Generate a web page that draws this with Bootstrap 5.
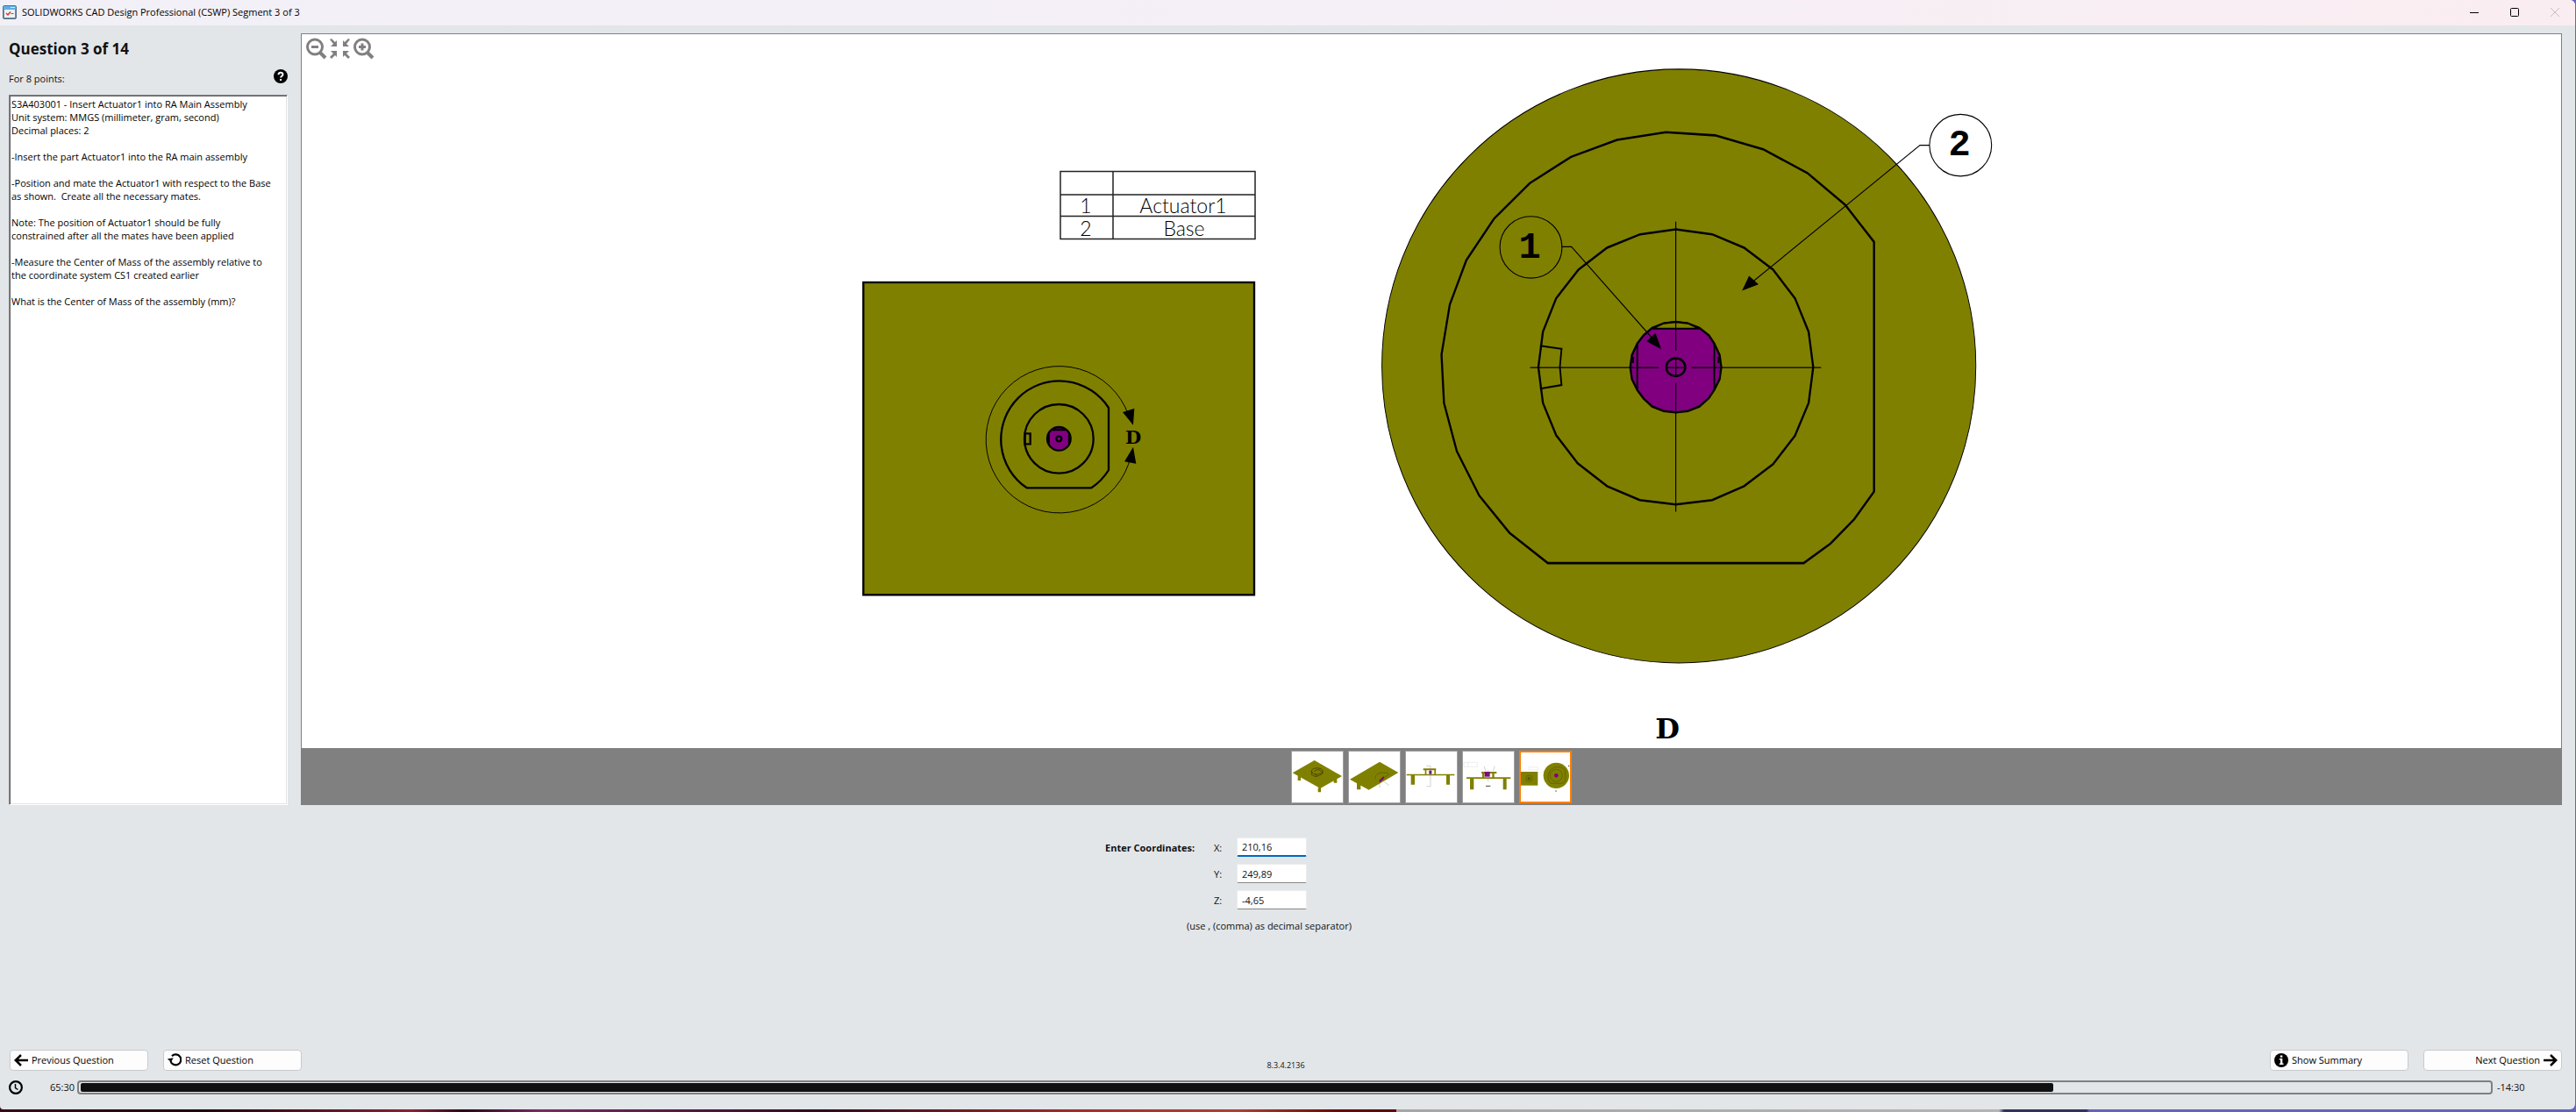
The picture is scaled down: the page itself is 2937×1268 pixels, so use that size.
<!DOCTYPE html>
<html lang="en">
<head>
<meta charset="utf-8">
<meta name="viewport" content="width=device-width, initial-scale=1">
<title>SOLIDWORKS CAD Design Professional (CSWP) Segment 3 of 3</title>
<link href="https://cdn.jsdelivr.net/npm/bootstrap@5.3.0/dist/css/bootstrap.min.css" rel="stylesheet">
<style>
  body { font-family: "Open Sans", "Noto Sans", sans-serif; font-size: 11px; line-height: 15px; color: #111;
    background: linear-gradient(90deg, #3a0a14 0, #20040c 8%, #8a2030 16%, #2a0618 18%, #7a2a60 21%, #30081c 32%, #a82c28 42%, #b04030 48%, #6a0800 52%, #5a0c00 54.2%, #a6a6a6 54.2%, #b4b4b4 77.6%, #33305e 77.8%, #33305e 81%, #6562bd 81.1%); }
  .app-window { background: #e2e6e9; border-radius: 0 6px 6px 4px; margin: 0 1px 3px 0; overflow: hidden; flex: 1 0 auto; }
  .title-strip { height: 29px; background: linear-gradient(90deg, #f2f0f7 0, #f5eff6 60%, #faedf1 100%); color: #000; padding: 0 0 2px 3px; gap: 6px; }
  .title-strip svg { display: block; }
  .app-title { font-size: 11px; }
  .caption-btn { width: 46px; height: 27px; padding: 0; border: 0; background: none; color: #000; margin-left: -6px; }
  .caption-btn:disabled { color: #c4bcc2; }
  .work-area { padding: 9px 15px 0 10px; gap: 15px; }
  .side-pane { width: 318px; flex: none; }
  .side-pane h1 { font-size: 17px; line-height: 24px; font-weight: 700; margin: 6px 0 10px; }
  .points-row { height: 22px; margin-bottom: 8px; }
  .help-btn { padding: 0; border: 0; background: none; margin-bottom: 4px; }
  .help-btn svg { display: block; }
  .question-box { background: #fff; color: #000; border: 1px solid; border-color: #858585 #fff #fff #858585; box-shadow: inset 1px 1px #5e5e5e, inset -1px -1px #e3e3e3; padding: 2px 12px 2px 2px; }
  .question-box p { margin: 0 0 15px; }
  .viewer { border: 1px solid #808080; border-bottom: 0; background: #fff; position: relative; min-width: 0; }
  .viewer-tools { position: absolute; left: 4px; top: 4px; gap: 2px; }
  .viewer-tools button { padding: 0; border: 0; background: none; width: 25px; height: 25px; }
  .viewer-tools svg { display: block; }
  .drawing { display: block; width: 100%; height: auto; }
  .thumb-strip { background: #808080; padding: 3px 0 2px; gap: 5px; }
  .thumb { width: 60px; height: 60px; padding: 0; background: #fff; border: 1px solid #a0a0a0; overflow: hidden; }
  .thumb.chosen { border: 2px solid #ff8000; }
  .thumb svg { display: block; width: 100%; height: 100%; }
  .answer-form { width: 416px; margin: 36px auto 0; }
  .answer-row { height: 24px; margin-bottom: 6px; }
  .answer-lead { width: 124px; font-weight: 700; white-space: nowrap; }
  .axis-label { width: 26px; }
  .answer-row input { width: 80px; height: 22px; border: 1px solid #ececec; border-bottom-color: #868686; border-radius: 2px; padding: 0 5px; background: #fff; color: #111; font-size: 11px; outline: 0; box-shadow: none; }
  .answer-row input.active-field { border-bottom: 2px solid #0067c0; }
  .answer-hint { margin: 10px 0 0 93px; }
  .foot-bar { padding: 0 15px 0 11px; }
  .btn-pair { gap: 17px; }
  .nav-btn { width: 158px; height: 24px; padding: 0 4px; gap: 4px; background: #fdfdfd; border: 1px solid #c8cbce; border-radius: 4px; color: #000; font-size: 11px; line-height: 22px; }
  .nav-btn svg { flex: none; }
  .build-no { font-size: 9px; line-height: 12px; margin-top: 12px; }
  .timer-row { padding: 10px 58px 17px 10px; height: 44px; }
  .time-left { width: 62px; padding-right: 3px; }
  .timer-track { height: 16px; border: 2px solid #808080; border-radius: 4px; padding: 1px 2px; background: transparent; font-size: 11px; }
  .timer-track .progress-bar { background: #101010; border-radius: 2px; }
  .time-over { width: 36px; padding-left: 5px; }
</style>
</head>
<body class="d-flex flex-column min-vh-100">
<div class="app-window d-flex flex-column">
  <header class="title-strip d-flex align-items-center">
    <svg width="16" height="16" viewBox="0 0 16 16" aria-hidden="true"><rect x=".5" y=".5" width="15" height="15" rx="1.5" fill="#6f8ea6" stroke="#527087"/><rect x="1" y="1" width="14" height="4" fill="#5cb0e6"/><path d="M9 2.500h5" stroke="#cfeaff"/><rect x="2" y="5" width="12" height="9" fill="#eef1f3"/><path d="M4 9l2 2 3-3.500" fill="none" stroke="#d23434" stroke-width="1.500"/><path d="M9.500 9.500h3" stroke="#666"/></svg>
    <span class="flex-grow-1 app-title">SOLIDWORKS CAD Design Professional (CSWP) Segment 3 of 3</span>
    <button class="caption-btn" aria-label="Minimize"><svg width="10" height="10" class="mx-auto"><path d="M0 5.500h10" stroke="currentColor"/></svg></button>
    <button class="caption-btn" aria-label="Maximize"><svg width="10" height="10" class="mx-auto"><rect x=".5" y=".5" width="9" height="9" rx="1" fill="none" stroke="currentColor"/></svg></button>
    <button class="caption-btn" aria-label="Close" disabled><svg width="10" height="10" class="mx-auto"><path d="M0 0l10 10M10 0L0 10" stroke="currentColor"/></svg></button>
  </header>

  <main class="work-area d-flex">
    <aside class="side-pane d-flex flex-column">
      <h1>Question 3 of 14</h1>
      <div class="points-row d-flex justify-content-between align-items-center">
        <span>For 8 points:</span>
        <button class="help-btn" aria-label="Help"><svg width="16" height="16" viewBox="0 0 16 16"><circle cx="8" cy="8" r="8"/><path d="M5.500 6.200C5.500 3 10.700 3 10.500 6c0 1.700-2.400 1.700-2.400 3.600M8.100 11v2" fill="none" stroke="#fff" stroke-width="2"/></svg></button>
      </div>
      <div class="question-box flex-grow-1">
        <p>S3A403001 - Insert Actuator1 into RA Main Assembly<br>Unit system: MMGS (millimeter, gram, second)<br>Decimal places: 2</p>
        <p>-Insert the part Actuator1 into the RA main assembly</p>
        <p>-Position and mate the Actuator1 with respect to the Base as shown.&nbsp; Create all the necessary mates.</p>
        <p>Note: The position of Actuator1 should be fully<br>constrained after all the mates have been applied</p>
        <p>-Measure the Center of Mass of the assembly relative to<br>the coordinate system CS1 created earlier</p>
        <p>What is the Center of Mass of the assembly (mm)?</p>
      </div>
    </aside>

    <section class="viewer flex-grow-1">
      <div class="viewer-tools d-flex">
        <button aria-label="Zoom out"><svg width="25" height="25" viewBox="0 0 25 25" fill="none" stroke="#808080"><circle cx="11" cy="10.500" r="8.500" stroke-width="3"/><path d="M17 17l6 6" stroke-width="4"/><path d="M7 10.500h8" stroke-width="3"/></svg></button>
        <button aria-label="Fit to window"><svg width="25" height="25" viewBox="0 0 25 25" fill="#808080"><path d="M1 2l2-1 4 4 2-2v7H2l3-3zM24 2l-2-1-4 4-2-2v7h7l-3-3zM1 22l2 2 4-4 2 2v-7H2l3 3zM24 22l-2 2-4-4-2 2v-7h7l-3 3z"/></svg></button>
        <button aria-label="Zoom in"><svg width="25" height="25" viewBox="0 0 25 25" fill="none" stroke="#808080"><circle cx="11" cy="10.500" r="8.500" stroke-width="3"/><path d="M17 17l6 6" stroke-width="4"/><path d="M7 10.500h8M11 6.500v8" stroke-width="3"/></svg></button>
      </div>

      <svg class="drawing" viewBox="344 39 2576 814" role="img" aria-label="Assembly drawing with detail D">
        <!-- bill of materials -->
        <g fill="none" stroke="#222" stroke-width="1.500"><path d="M1209 195.500h222v77h-222zM1209 222h222M1209 246.500h222M1269 195.500v77"/></g>
        <g font-family="Lato, 'Open Sans', sans-serif" font-weight="300" font-size="23" text-anchor="middle" fill="#000">
          <text x="1238" y="243">1</text><text x="1349" y="243">Actuator1</text>
          <text x="1238" y="269">2</text><text x="1350" y="269">Base</text>
        </g>
        <!-- top view of the base -->
        <g transform="translate(970 180) scale(.33333)" fill="none" stroke="#000" stroke-width="7">
          <rect x="43" y="426" width="1337" height="1069" fill="#808000"/>
          <path d="M950 880A251 251 0 1 0 958 1020" stroke-width="3"/>
          <path d="M602 1129A200 200 0 1 1 882 855V1068A200 200 0 0 1 823 1129Z"/>
          <circle cx="712" cy="961" r="118"/>
          <path d="M596 943h18v36h-18z"/>
          <circle cx="712" cy="961" r="40" fill="#800080"/>
          <path d="M690 930h44M677 945v32M747 945v32"/>
          <circle cx="712" cy="961" r="9"/>
          <path d="M966 914l-36-44 40-13zM966 989l-30 50 40 7z" fill="#000" stroke="none"/>
        </g>
        <!-- detail D -->
        <g transform="translate(1560 60) scale(.4719 .5102)" fill="none" stroke="#000" stroke-width="4">
          <ellipse cx="750.500" cy="700.500" rx="717.500" ry="663.500" fill="#808000" stroke-width="2"/>
          <path d="M434 1141L341 1073 268 990 214 891 183 783 177 675 197 563 237 464 304 371 390 292 490 233 601 195 719 178 838 185 954 216 1061 269 1152 340 1222 423V981L1174 1043 1117 1097 1052 1141Z" stroke-width="5"/>
          <path d="M743 395L831 406 908 436 978 485 1031 549 1064 624 1075 703 1064 783 1031 856 978 920 908 969 831 1000 743 1010 656 1000 577 969 506 918 454 855 422 783 411 703 422 624 454 549 508 485 577 436 657 406Z" stroke-width="5"/>
          <path d="M415 655L467 662 463 703 467 743 415 751"/>
          <path d="M743 602L772 605 800 615 823 632 836 650 849 676 853 703 849 730 836 754 823 772 800 791 772 801 743 804 714 801 686 791 665 773 650 754 637 730 633 703 637 676 650 650 665 632 686 615 714 605Z" fill="#800080" stroke-width="5"/>
          <path d="M686 617L714 605 743 602 772 605 800 617Z" fill="#808000"/>
          <path d="M650 650V754M836 650V754M640 680v14M846 680v14"/>
          <ellipse cx="743" cy="703" rx="23" ry="20" stroke-width="5"/>
          <path d="M743 378V666M743 683V723M743 738V1026M391 704H702M720 704H765M781 704H1094" stroke-width="2.500"/>
          <g stroke-width="2.300"><path d="M467 434H491L685 637M1356 207H1333L925 515"/><ellipse cx="393" cy="435" rx="75" ry="69"/><ellipse cx="1431" cy="207" rx="75" ry="69"/></g>
          <path d="M708 663L672 645 694 627ZM903 532L920 499 943 518Z" fill="#000" stroke="none"/>
        </g>
        <g font-family="'Liberation Mono', monospace" font-weight="700" font-size="42" text-anchor="middle">
          <text x="1744" y="294">1</text><text x="2234" y="177">2</text>
        </g>
        <g font-family="'DejaVu Serif', serif" font-weight="700" text-anchor="middle">
          <text x="1901" y="842" font-size="32">D</text><text x="1292" y="506" font-size="21">D</text>
        </g>
      </svg>

      <div class="thumb-strip d-flex justify-content-center">
        <button class="thumb" aria-label="Isometric view"><svg viewBox="70 52 174 174"><path fill="#808000" d="M72 125l75-43 94 54-74 42zM90 133h10v18H90zM159 176h10v15h-10zM213 145h11v14h-11z"/><path d="M137 119c0-14 38-14 38 0s-38 14-38 0v12l14 7 14-5 10-6v-8M146 121c4-9 23-9 23 0" fill="none" stroke="#333300" stroke-width="2"/><path d="M149 131l7 4" stroke="#800080" stroke-width="3"/></svg></button>
        <button class="thumb" aria-label="Isometric section view"><svg viewBox="265 52 174 174"><path fill="#808000" d="M268 147l102-60 64 37-101 59zM292 160h13v22h-13z"/><path d="M356 145c-4-14 10-21 26-21 18 0 24 6 13 11l-28 17" fill="none" stroke="#555500" stroke-width="2"/><path fill="#800080" d="M369 150l15-15v11l-14 12z"/><path d="M370 159v17M386 155l16 13" stroke="#666"/></svg></button>
        <button class="thumb" aria-label="Front view"><svg viewBox="460 52 174 174"><path fill="#808000" d="M462 129h164v5H462zM477 132h13v33h-13zM598 132h12v33h-12zM519 110h44v6h-44zM525 114h5v17h-5zM557 114h5v17h-5z"/><path fill="#800080" d="M539 117h9v12h-9z"/><path d="M530 101h14v70h-14" fill="none" stroke="#777"/></svg></button>
        <button class="thumb" aria-label="Section view"><svg viewBox="655 52 174 174"><path d="M658 89h46v15h-46zM672 89v15" fill="none" stroke="#ccc"/><path fill="#808000" d="M667 140h151v5H667zM679 143h13v39h-13zM792 143h12v39h-12zM718 121h52v6h-52zM721 125h7v15h-7zM755 125h7v15h-7z"/><path fill="#800080" d="M729 121h18v17h-18z"/><path d="M727 102l6 18M764 102l-6 16M741 115v40" stroke="#777"/><path d="M733 170h16" stroke="#444" stroke-width="3"/></svg></button>
        <button class="thumb chosen" aria-label="Detail view" aria-pressed="true"><svg viewBox="852 54 168 168"><path d="M880 104h30v10h-30z" fill="none" stroke="#ccc"/><path fill="#808000" d="M850 120h60v47h-60z"/><circle cx="973" cy="133" r="44" fill="#808000"/><g fill="none" stroke="#4c4c00" stroke-width="1.500"><circle cx="880" cy="143" r="11"/><circle cx="880" cy="143" r="5"/><circle cx="973" cy="133" r="21"/><path d="M954 160a32 32 0 1 1 50-46v38l-10 8z"/></g><circle cx="973" cy="133" r="7" fill="#800080"/><path d="M879 141v5M970 186h4M1014 100h4" stroke="#222" stroke-width="3"/></svg></button>
      </div>
    </section>
  </main>

  <form class="answer-form">
    <div class="answer-row d-flex align-items-center"><span class="answer-lead">Enter Coordinates:</span><label class="axis-label" for="coord-x">X:</label><input class="active-field" id="coord-x" type="text" value="210,16"></div>
    <div class="answer-row d-flex align-items-center"><span class="answer-lead"></span><label class="axis-label" for="coord-y">Y:</label><input id="coord-y" type="text" value="249,89"></div>
    <div class="answer-row d-flex align-items-center"><span class="answer-lead"></span><label class="axis-label" for="coord-z">Z:</label><input id="coord-z" type="text" value="-4,65"></div>
    <p class="answer-hint">(use , (comma) as decimal separator)</p>
  </form>

  <footer class="mt-auto">
    <div class="foot-bar d-flex justify-content-between">
      <div class="btn-pair d-flex">
        <button class="nav-btn d-flex align-items-center"><svg width="16" height="16" viewBox="0 0 16 16" fill="none" stroke="#000" stroke-width="2.500"><path d="M16 8H2M8 2L1.800 8 8 14"/></svg>Previous Question</button>
        <button class="nav-btn d-flex align-items-center"><svg width="16" height="16" viewBox="0 0 16 16"><path d="M3.500 9A6 6 0 1 0 5 3.200" fill="none" stroke="#000" stroke-width="2.200"/><path d="M0 6h7L3.500 10z" transform="rotate(-12 3 7)"/></svg>Reset Question</button>
      </div>
      <span class="build-no">8.3.4.2136</span>
      <div class="btn-pair d-flex">
        <button class="nav-btn d-flex align-items-center"><svg width="16" height="16" viewBox="0 0 16 16"><circle cx="8" cy="8" r="8"/><path fill="#fff" d="M6.800 2.500h2.500v2.200H6.800zM5.800 6h3.500v5.500h1.200V13H5.800v-1.500H7v-4H5.800z"/></svg>Show Summary</button>
        <button class="nav-btn d-flex align-items-center justify-content-end">Next Question<svg width="16" height="16" viewBox="0 0 16 16" fill="none" stroke="#000" stroke-width="2.500"><path d="M0 8h14M8 2l6.200 6L8 14"/></svg></button>
      </div>
    </div>
    <div class="timer-row d-flex align-items-center">
      <svg width="16" height="16" viewBox="0 0 16 16" fill="none" stroke="#000" aria-hidden="true"><circle cx="8" cy="8" r="6.900" stroke-width="2.200"/><path d="M7.500 4v4.500l3 2" stroke-width="1.500"/></svg>
      <span class="time-left text-end">65:30</span>
      <div class="progress timer-track flex-grow-1" role="progressbar" aria-label="Time used" aria-valuenow="82" aria-valuemin="0" aria-valuemax="100"><div class="progress-bar" style="width:81.900%"></div></div>
      <span class="time-over">-14:30</span>
    </div>
  </footer>
</div>
<script src="https://cdn.jsdelivr.net/npm/bootstrap@5.3.0/dist/js/bootstrap.bundle.min.js"></script>
</body>
</html>
